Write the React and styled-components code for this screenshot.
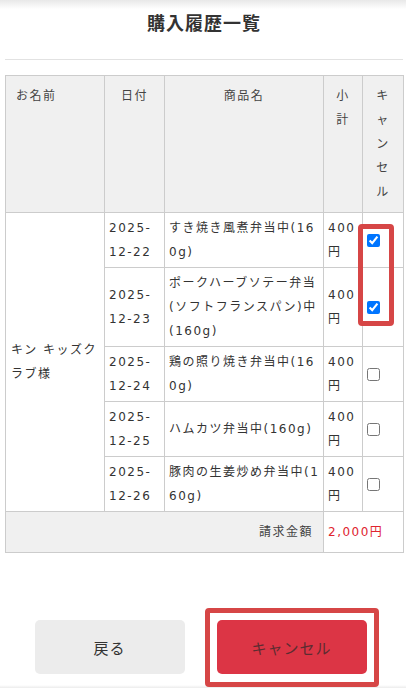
import styled, { createGlobalStyle } from 'styled-components';

const GlobalStyle = createGlobalStyle`
  * { box-sizing: border-box; }
  body {
    margin: 0;
    background: #fff;
    font-family: "DejaVu Sans", "Noto Sans CJK JP", sans-serif;
    color: #333;
  }
`;

const Page = styled.div`
  min-height: 688px;
  padding: 0 3px 0 5px;
  background:
    linear-gradient(to bottom, #e8e8e8 0, rgba(255, 255, 255, 0) 9px) top / 100% 9px no-repeat,
    linear-gradient(to top, #ececec 0, rgba(255, 255, 255, 0) 3px) bottom / 100% 3px no-repeat,
    #fff;
`;

const Header = styled.header`
  padding: 10px 0 25px;
  border-bottom: 1px solid #e2e2e2;
`;

const Title = styled.h1`
  margin: 0;
  font-family: "Noto Sans CJK JP", sans-serif;
  font-size: 18px;
  line-height: 24px;
  font-weight: 700;
  letter-spacing: 1px;
  text-align: center;
  color: #333;
`;

const Table = styled.table`
  width: 398px;
  margin-top: 15px;
  border-collapse: collapse;
  table-layout: fixed;
  font-size: 12px;
  line-height: 24px;
  letter-spacing: 1.5px;
  word-break: break-all;
`;

const Th = styled.th`
  padding: 8px 10px;
  background: #f0f0f0;
  border: 1px solid #ccc;
  font-weight: 400;
  color: #444;
  vertical-align: top;
  text-align: ${(p) => p.$align || 'center'};
`;

const Td = styled.td`
  position: relative;
  padding: 3px ${(p) => p.$padR ?? 4}px 3px ${(p) => p.$padL ?? 4}px;
  border: 1px solid #ccc;
  vertical-align: middle;
  color: #333;
`;

const DateCell = styled(Td)`
  word-break: normal;
`;

const TotalLabel = styled.td`
  padding: 8px 10px;
  border: 1px solid #ccc;
  background: #f0f0f0;
  text-align: right;
  color: #444;
`;

const TotalAmount = styled.td`
  padding: 8px 4px;
  border: 1px solid #ccc;
  color: #e0242f;
  white-space: nowrap;
`;

const Check = styled.input.attrs({ type: 'checkbox' })`
  display: block;
  width: 13px;
  height: 13px;
  margin: 0;
`;

const Highlight = styled.span`
  position: absolute;
  left: ${(p) => p.$left}px;
  top: ${(p) => p.$top}px;
  width: ${(p) => p.$w}px;
  height: ${(p) => p.$h}px;
  border: 5px solid #d64646;
  border-radius: 4px;
  pointer-events: none;
`;

const Actions = styled.div`
  display: flex;
  justify-content: center;
  gap: 32px;
  margin-top: 67px;
  padding-right: 7px;
`;

const ButtonWrap = styled.div`
  position: relative;
`;

const Button = styled.button`
  width: 150px;
  height: 54px;
  border: none;
  border-radius: 5px;
  font-family: "Noto Sans CJK JP", sans-serif;
  font-size: 15px;
  letter-spacing: 1px;
  background: ${(p) => (p.$danger ? '#dc3545' : '#ececec')};
  color: ${(p) => (p.$danger ? '#5c2c31' : '#333')};
  cursor: pointer;
`;

const rows = [
  { date: '2025-12-22', name: 'すき焼き風煮弁当中(160g)', checked: true },
  { date: '2025-12-23', name: 'ポークハーブソテー弁当(ソフトフランスパン)中(160g)', checked: true },
  { date: '2025-12-24', name: '鶏の照り焼き弁当中(160g)', checked: false },
  { date: '2025-12-25', name: 'ハムカツ弁当中(160g)', checked: false },
  { date: '2025-12-26', name: '豚肉の生姜炒め弁当中(160g)', checked: false },
];

const splitDate = (d) => {
  const [y, ...rest] = d.split('-');
  return (
    <>
      {y}-<wbr />
      {rest.join('-')}
    </>
  );
};

export default function App() {
  return (
    <>
      <GlobalStyle />
      <Page>
        <Header>
          <Title>購入履歴一覧</Title>
        </Header>

        <Table>
          <colgroup>
            <col style={{ width: 99 }} />
            <col style={{ width: 60 }} />
            <col style={{ width: 159 }} />
            <col style={{ width: 39 }} />
            <col style={{ width: 41 }} />
          </colgroup>
          <thead>
            <tr>
              <Th $align="left">お名前</Th>
              <Th>日付</Th>
              <Th>商品名</Th>
              <Th>小計</Th>
              <Th>キャンセル</Th>
            </tr>
          </thead>
          <tbody>
            {rows.map((r, i) => (
              <tr key={r.date}>
                {i === 0 && (
                  <Td rowSpan={rows.length} $padL={5} $padR={5}>
                    キン キッズクラブ様
                  </Td>
                )}
                <DateCell>{splitDate(r.date)}</DateCell>
                <Td $padR={2}>{r.name}</Td>
                <Td>400円</Td>
                <Td>
                  <Check defaultChecked={r.checked} />
                  {i === 0 && <Highlight $left={-5} $top={11} $w={36} $h={102} />}
                </Td>
              </tr>
            ))}
            <tr>
              <TotalLabel colSpan={3}>請求金額</TotalLabel>
              <TotalAmount colSpan={2}>2,000円</TotalAmount>
            </tr>
          </tbody>
        </Table>

        <Actions>
          <ButtonWrap>
            <Button>戻る</Button>
          </ButtonWrap>
          <ButtonWrap>
            <Button $danger>キャンセル</Button>
            <Highlight $left={-12} $top={-12} $w={174} $h={79} />
          </ButtonWrap>
        </Actions>
      </Page>
    </>
  );
}
